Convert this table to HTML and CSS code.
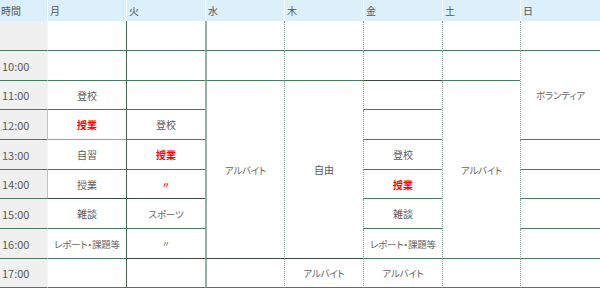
FILE: index.html
```html
<!DOCTYPE html>
<html lang="ja">
<head>
<meta charset="utf-8">
<link rel="stylesheet" href="styles.css">
</head>
<body>
<div class="tt">
  <div class="hd">時間</div><div class="hd">月</div><div class="hd">火</div><div class="hd">水</div><div class="hd">木</div><div class="hd">金</div><div class="hd">土</div><div class="hd">日</div>

  <div class="tm"></div><div class="c l-mon"></div><div class="c l-sol"></div><div class="c l-thk"></div><div class="c l-dot"></div><div class="c l-dot"></div><div class="c l-dot"></div><div class="c l-dot"></div>

  <div class="tm">10:00</div><div class="c l-mon"></div><div class="c l-sol"></div><div class="c l-thk"></div><div class="c l-dot"></div><div class="c l-dot dk"></div><div class="c l-dot"></div><div class="c l-dot r3 kana">ボランティア</div>

  <div class="tm">11:00</div><div class="c l-mon">登校</div><div class="c l-sol"></div><div class="c l-thk r6 dk kana">アルバイト</div><div class="c l-dot r6 dk">自由</div><div class="c l-dot"></div><div class="c l-dot r6 kana">アルバイト</div>

  <div class="tm">12:00</div><div class="c l-mint lt"><span class="red">授業</span></div><div class="c l-sol">登校</div><div class="c l-dot"></div>

  <div class="tm">13:00</div><div class="c l-mon">自習</div><div class="c l-sol"><span class="red">授業</span></div><div class="c l-dot">登校</div><div class="c l-dot"></div>

  <div class="tm">14:00</div><div class="c l-mint dk">授業</div><div class="c l-sol dk"><span class="red ditto">〃</span></div><div class="c l-dot"><span class="red">授業</span></div><div class="c l-dot"></div>

  <div class="tm">15:00</div><div class="c l-mon">雑談</div><div class="c l-sol kana">スポーツ</div><div class="c l-dot">雑談</div><div class="c l-dot"></div>

  <div class="tm">16:00</div><div class="c l-mon kana">レポート・課題等</div><div class="c l-sol dk"><span class="ditto">〃</span></div><div class="c l-dot kana">レポート・課題等</div><div class="c l-dot"></div>

  <div class="tm">17:00</div><div class="c l-mon"></div><div class="c l-sol"></div><div class="c l-thk"></div><div class="c l-dot kana">アルバイト</div><div class="c l-dot kana">アルバイト</div><div class="c l-dot"></div><div class="c l-dot"></div>
</div>
</body>
</html>
```

FILE: styles.css
```css
html, body {
  margin: 0;
  padding: 0;
  background: #ffffff;
}

body {
  font-family: "Noto Sans CJK JP", "Noto Sans", sans-serif;
  color: #555555;
}

.tt {
  display: grid;
  grid-template-columns: 47px 79px 79px 79px 79px 79px 78px 80px;
  grid-template-rows: 21px 30px 30px 29px 30px 30px 29px 30px 30px 29px;
  width: 600px;
}

.hd {
  background: #dcf0fb;
  border-left: 1px solid #ffffff;
  font-size: 10px;
  line-height: 21px;
  padding-left: 2px;
  color: #555555;
}

.hd:first-child {
  border-left: none;
  padding-left: 1px;
}

.tm {
  background: #f0f0f0;
  border-bottom: 1px solid #4a7a5e;
  font-size: 11px;
  display: flex;
  align-items: center;
  padding-left: 2px;
  color: #5a5a5a;
  box-sizing: border-box;
}

.c {
  box-sizing: border-box;
  border-bottom: 1px solid #4a7a5e;
  display: flex;
  align-items: center;
  justify-content: center;
  font-size: 10px;
  color: #5a5a5a;
  white-space: nowrap;
}

.kana {
  font-feature-settings: "palt" 1;
  font-size: 9.5px;
  letter-spacing: -0.2px;
  color: #666666;
}

.l-mon {
  border-left: 1px solid #f4f4f4;
}

.l-mint {
  border-left: 1px solid #9fd6b9;
}

.l-sol {
  border-left: 1px solid #3f6e53;
}

.l-thk {
  border-left: 2px solid #8fb3a0;
}

.l-dot {
  border-left: 1px dotted #8aa598;
}

.dk {
  border-bottom-color: #3a4a42;
}

.lt {
  border-bottom-color: #7fb295;
}

.r3 {
  grid-row: span 3;
}

.r6 {
  grid-row: span 6;
}

.red {
  color: #ff0000;
  font-weight: bold;
}

.ditto {
  font-size: 8px;
}
```
